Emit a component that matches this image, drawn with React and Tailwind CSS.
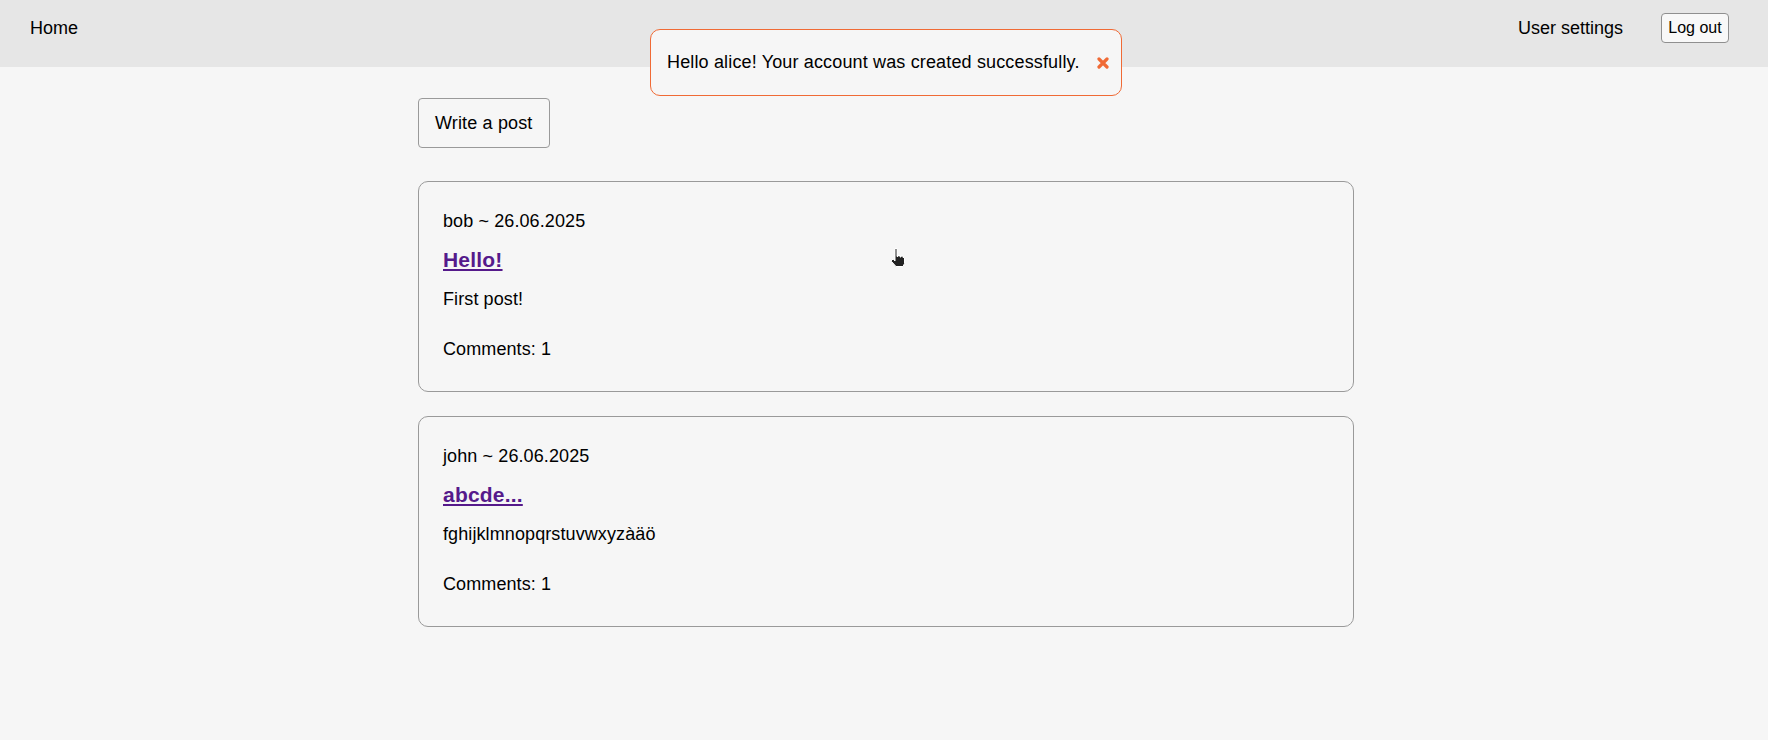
import React from 'react';

const posts = [
  { author: 'bob', date: '26.06.2025', title: 'Hello!', body: 'First post!', comments: 1 },
  { author: 'john', date: '26.06.2025', title: 'abcde...', body: 'fghijklmnopqrstuvwxyzàäö', comments: 1 },
];

function PostCard({ post }) {
  return (
    <div className="flex flex-col border border-[#9a9a9a] rounded-[10px] px-[24px] pt-[29px] pb-[31px]">
      <p className="leading-[21px] tracking-[0.1px]">
        {post.author} ~ {post.date}
      </p>
      <a href="#" className="mt-[16px] self-start text-[21px] leading-[24px] font-bold tracking-[0.2px] text-[#551a8b] underline">
        {post.title}
      </a>
      <p className="mt-[17px] leading-[21px] tracking-[0.1px]">{post.body}</p>
      <p className="mt-[29px] leading-[21px] tracking-[0.1px]">Comments: {post.comments}</p>
    </div>
  );
}

function HandCursor() {
  return (
    <svg width="18" height="22" viewBox="0 0 18 22" className="absolute left-[890px] top-[247px]">
      <path
        d="M5 1.5 h2 v8 h1 v-1 h2 v1.5 h1 v-1 h2 v1.5 h1.5 v6 l-1.5 3 h-7 l-4.5-5 v-2 h2 l1.5 1.5 z"
        fill="#222"
        stroke="#fff"
        strokeWidth="1"
        strokeLinejoin="round"
      />
    </svg>
  );
}

export default function App() {
  return (
    <div className="relative min-h-[740px] bg-[#f6f6f6] text-[18px] text-black font-['Liberation_Sans',Arial,sans-serif]">
      {/* ---- Header ---- */}
      <header className="h-[67px] bg-[#e6e6e6] flex items-start justify-between pt-[13px] pl-[30px] pr-[39px]">
        <a href="#" className="leading-[30px]">Home</a>
        <div className="flex items-center gap-[38px]">
          <a href="#" className="leading-[30px]">User settings</a>
          <button className="h-[30px] w-[68px] text-[16px] bg-[#f8f8f8] border border-[#8f8f8f] rounded-[4px]">
            Log out
          </button>
        </div>
      </header>

      {/* ---- Flash message ---- */}
      <div className="absolute top-[29px] left-[calc(50%+2px)] -translate-x-1/2 w-[472px] h-[67px] flex items-center justify-between pl-[16px] pr-[12px] bg-[#f6f6f6] border border-[#f06a35] rounded-[10px]">
        <span className="leading-[21px] tracking-[0.15px]">Hello alice! Your account was created successfully.</span>
        <svg width="12" height="12" viewBox="0 0 12 12">
          <path d="M2 2 L10 10 M10 2 L2 10" stroke="#f06a35" strokeWidth="3.2" strokeLinecap="round" />
        </svg>
      </div>

      {/* ---- Content ---- */}
      <main className="w-[940px] mx-auto pl-[4px] pt-[31px] pb-10">
        <button className="h-[50px] px-[16px] border border-[#9a9a9a] rounded-[4px] leading-[21px] tracking-[0.15px]">
          Write a post
        </button>
        <div className="mt-[33px] flex flex-col gap-[24px]">
          {posts.map((p) => (
            <PostCard key={p.author} post={p} />
          ))}
        </div>
      </main>

      <HandCursor />
    </div>
  );
}
